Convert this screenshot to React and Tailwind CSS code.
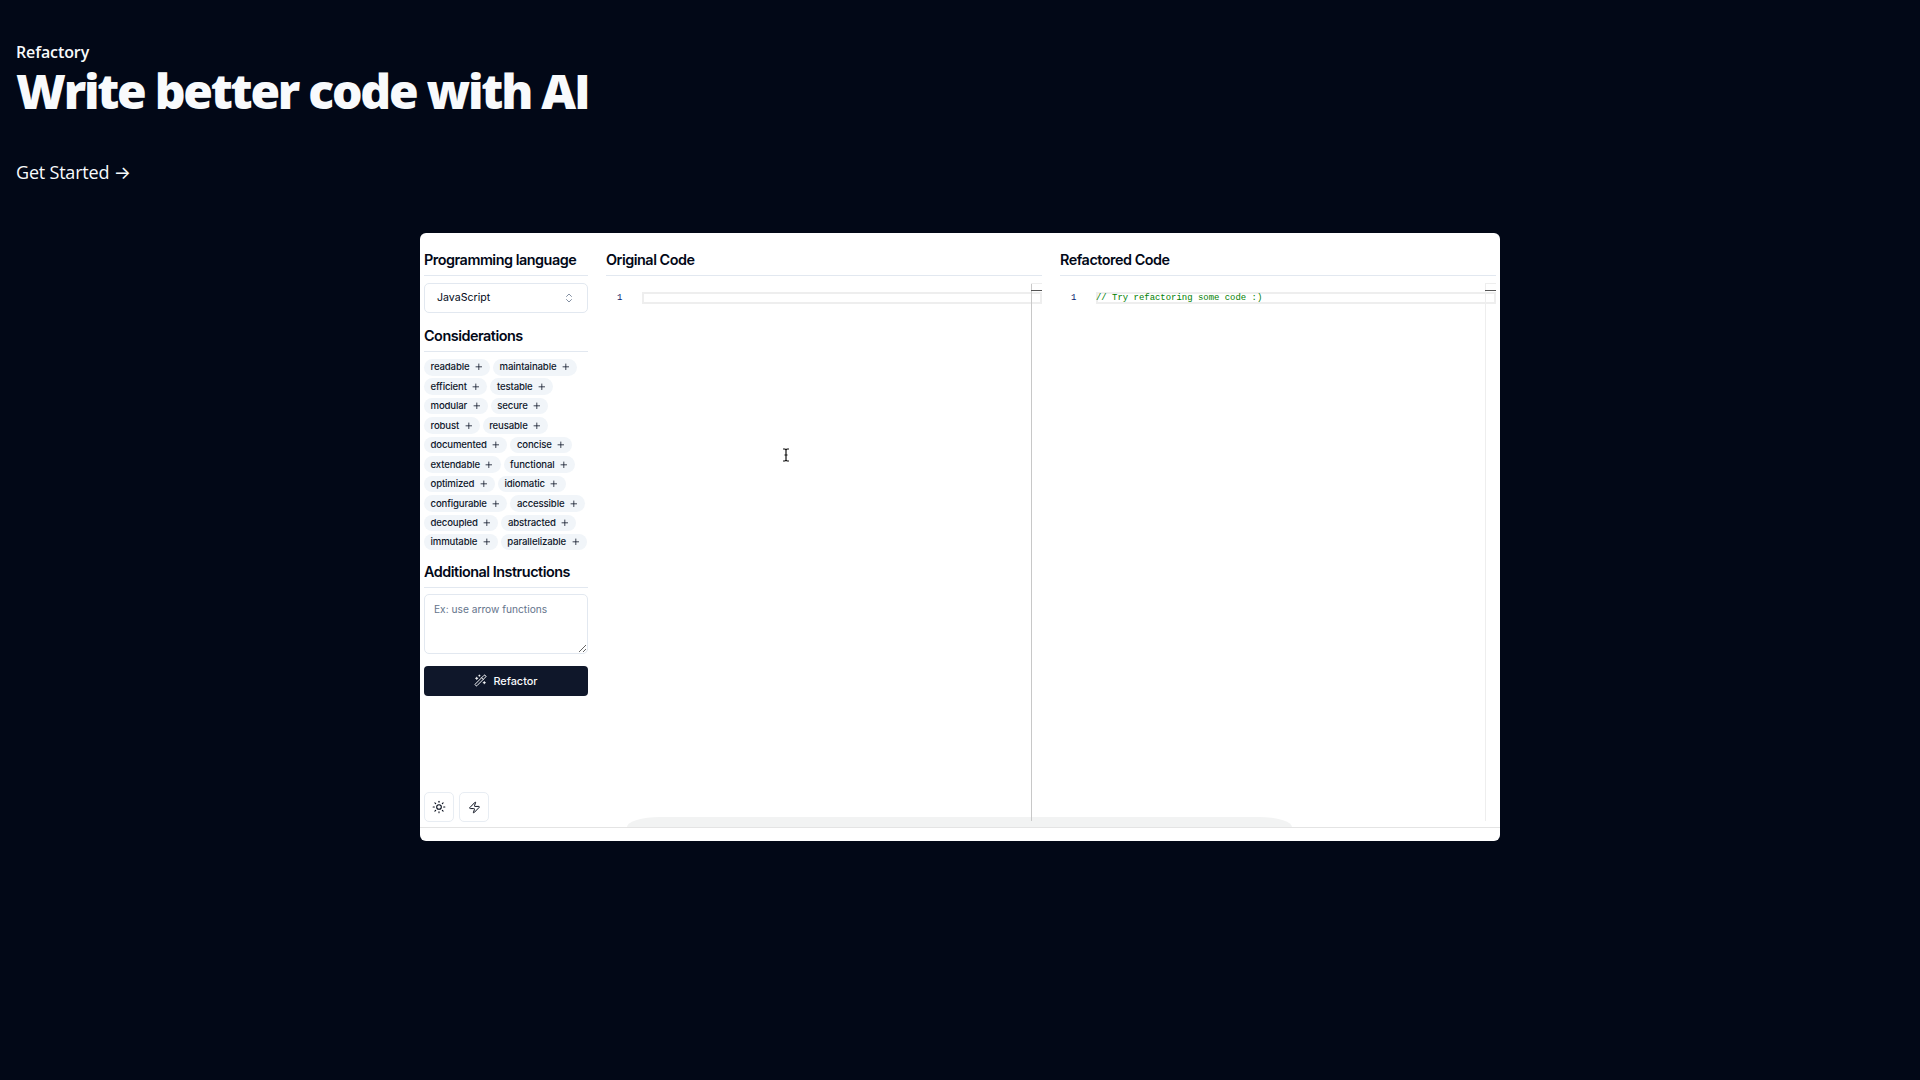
import React from "react";
import { Plus, ChevronsUpDown, WandSparkles, Sun, Zap } from "lucide-react";

const rows = [
  ["readable", "maintainable"],
  ["efficient", "testable"],
  ["modular", "secure"],
  ["robust", "reusable"],
  ["documented", "concise"],
  ["extendable", "functional"],
  ["optimized", "idiomatic"],
  ["configurable", "accessible"],
  ["decoupled", "abstracted"],
  ["immutable", "parallelizable"],
];

function Badge({ label }) {
  return (
    <div className="flex h-[16.5px] items-center rounded-full bg-[#f1f5f9] px-[6.5px] text-[9.6px] font-medium leading-none tracking-[-0.14px] text-[#0f172a]">
      <span>{label}</span>
      <Plus size={9.6} strokeWidth={2} className="ml-[4.5px] text-[#0f172a]" />
    </div>
  );
}

function Heading({ children }) {
  return (
    <div className="flex h-[31px] items-center border-b border-[#e2e8f0] text-[14.4px] font-semibold tracking-[-0.48px] text-[#020817]">
      {children}
    </div>
  );
}

function Editor({ text, ruler, dash }) {
  return (
    <div className="relative h-[545px] pt-[15.5px]" style={{ fontFamily: '"Liberation Mono", monospace' }}>
      <div className="flex h-[12px] text-[8.95px] leading-[12px]">
        <div className="w-[36px] shrink-0 pl-[11px] text-[#0b216f]">1</div>
        <div className="flex-1 border-2 border-[#eeeeee] text-[#008000]">
          <div className="-mx-[2px] -mt-[2px]">{text}</div>
        </div>
      </div>
      <div className={"absolute bottom-0 left-[425px] top-[7px] z-10 w-px " + ruler} />
      <div className="absolute left-[425px] top-[7px] z-10 h-px w-[11px] bg-[#eeeeee]" />
      <div className={"absolute left-[425px] top-[14px] z-10 h-px w-[11px] " + dash} />
    </div>
  );
}

export default function App() {
  return (
    <div className="h-[1080px] overflow-hidden bg-[#020817]" style={{ fontFamily: "Inter, sans-serif" }}>
      <header className="pl-4 pt-[42px] text-[#f8fafc]" style={{ fontFamily: '"Open Sans", sans-serif' }}>
        <div className="text-[16px] font-semibold leading-[20px] tracking-[-0.1px]">Refactory</div>
        <h1 className="mt-[1px] text-[48px] font-extrabold leading-[56px] tracking-[-2.25px]">
          Write better code with AI
        </h1>
        <div className="mt-[40px] text-[18px] leading-[26px] tracking-[-0.2px]">
          Get Started <span style={{ fontFamily: "Inter, sans-serif" }}>→</span>
        </div>
      </header>

      <main className="relative mx-auto mt-[47px] flex h-[608px] w-[1080px] flex-col overflow-hidden rounded-[6px] bg-white">
        <div className="flex h-[594px] gap-[18px] px-[4px] pt-[12px]">
          <aside className="relative w-[164px] shrink-0">
            <Heading>Programming language</Heading>
            <div className="mt-[7px] flex h-[30px] items-center justify-between rounded-[5px] border border-[#e2e8f0] px-[12px] text-[10.6px] text-[#020817]">
              <span>JavaScript</span>
              <ChevronsUpDown size={12} strokeWidth={1.6} className="text-[#64748b]" />
            </div>
            <div className="mt-[7.5px]">
              <Heading>Considerations</Heading>
            </div>
            <div className="mt-[6px] flex flex-col gap-[2.95px] pt-[1.5px]">
              {rows.map((r) => (
                <div key={r[0]} className="flex gap-[3px]">
                  <Badge label={r[0]} />
                  <Badge label={r[1]} />
                </div>
              ))}
            </div>
            <div className="mt-[6.5px]">
              <Heading>Additional Instructions</Heading>
            </div>
            <textarea
              placeholder="Ex: use arrow functions"
              className="mt-[6px] block h-[60px] w-full rounded-[5px] border border-[#e2e8f0] px-[9px] py-[6px] text-[10.2px] leading-[16px] text-[#020817] outline-none placeholder:text-[#64748b]"
            />
            <button className="mt-[12px] flex h-[30px] w-full items-center justify-center gap-[6px] rounded-[4px] bg-[#0f172a] text-[10.9px] font-medium text-[#f8fafc]">
              <WandSparkles size={13} strokeWidth={1.8} />
              Refactor
            </button>
            <div className="absolute bottom-[5px] left-0 flex gap-[5px]">
              <div className="flex h-[30px] w-[30px] items-center justify-center rounded-[5px] border border-[#e8edf3] text-[#020817]">
                <Sun size={14} strokeWidth={1.8} />
              </div>
              <div className="flex h-[30px] w-[30px] items-center justify-center rounded-[5px] border border-[#e8edf3] text-[#020817]">
                <Zap size={13} strokeWidth={1.8} />
              </div>
            </div>
          </aside>
          <section className="w-[436px] shrink-0">
            <Heading>Original Code</Heading>
            <Editor text="" ruler="bg-[#c8c8c8]" dash="bg-[#555555]" />
          </section>
          <section className="w-[436px] shrink-0">
            <Heading>Refactored Code</Heading>
            <Editor text="// Try refactoring some code :)" ruler="bg-[#eeeeee]" dash="bg-[#555555]" />
          </section>
        </div>
        <div className="h-[14px] border-t border-[#e4e4e4]" />
        <div className="absolute bottom-[14px] left-[207px] h-[10px] w-[665px] rounded-tl-[33px_10px] rounded-tr-[33px_10px] bg-[#f2f3f3]" />
      </main>

      <svg className="absolute left-[781px] top-[448px]" width="10" height="14" viewBox="0 0 10 14" fill="none" stroke="#111" strokeWidth="1.2">
        <path d="M2 1h2l1 1 1-1h2M5 2v10M2 13h2l1-1 1 1h2M3.5 7h3" />
      </svg>
    </div>
  );
}
